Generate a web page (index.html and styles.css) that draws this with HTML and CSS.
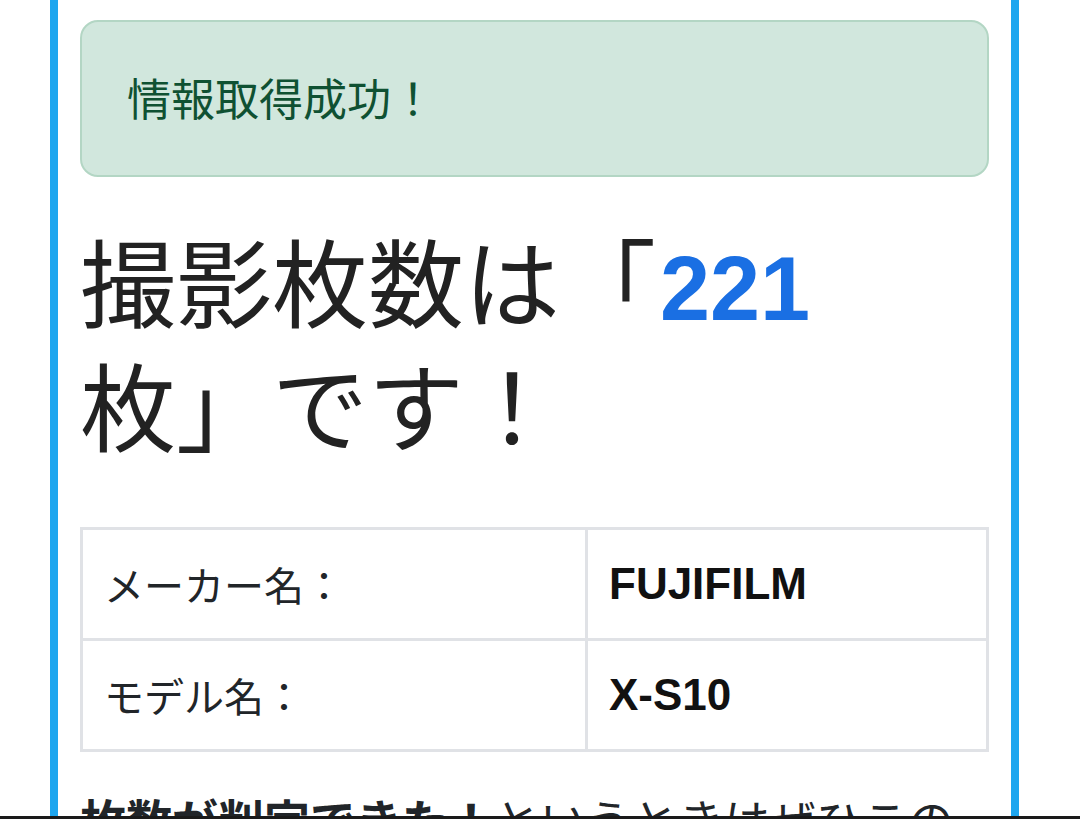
FILE: index.html
```html
<!DOCTYPE html>
<html lang="ja">
<head>
<meta charset="utf-8">
<title>撮影枚数</title>
<link rel="stylesheet" href="styles.css">
</head>
<body>
<main class="frame">
  <div class="alert">情報取得成功！</div>
  <h1 class="count">撮影枚数は「<span class="num">221</span>枚」です！</h1>
  <table class="info">
    <tr>
      <td class="label">メーカー名：</td>
      <td class="value">FUJIFILM</td>
    </tr>
    <tr>
      <td class="label">モデル名：</td>
      <td class="value">X-S10</td>
    </tr>
  </table>
  <p class="note"><strong>枚数が判定できた！</strong>というときはぜひこの</p>
</main>
<div class="bottom-bar"></div>
</body>
</html>
```
FILE: styles.css
```css
html, body {
  margin: 0;
  padding: 0;
  background: #ffffff;
  height: 819px;
  overflow: hidden;
}
body {
  font-family: "Liberation Sans", "Noto Sans CJK JP", sans-serif;
  color: #212529;
}
.frame {
  box-sizing: border-box;
  margin-left: 50px;
  width: 969px;
  min-height: 819px;
  border-left: 8px solid #1ea6ef;
  border-right: 8px solid #1ea6ef;
  padding: 20px 22px 0 22px;
}
.alert {
  box-sizing: border-box;
  height: 157px;
  background: #d1e7dd;
  border: 2px solid #b3d6c4;
  border-radius: 18px;
  color: #0f5132;
  font-size: 44px;
  line-height: 61px;
  padding: 48px 45px 44px 45px;
  margin-bottom: 49px;
}
.count {
  margin: 0 0 56px 0;
  font-size: 96px;
  font-weight: 400;
  line-height: 121px;
  color: #222222;
  text-spacing-trim: space-all;
}
.num {
  color: #1a6fe3;
  font-weight: 700;
  font-size: 90px;
  margin-left: 4px;
}
.info {
  width: 909px;
  border-collapse: collapse;
  margin-bottom: 36px;
}
.info td {
  border: 3px solid #e0e2e6;
  height: 108px;
  padding: 0 21px;
  font-size: 40px;
  vertical-align: middle;
}
.info td.label {
  width: 460px;
  color: #212529;
}
.info td.value {
  font-weight: 700;
  font-size: 44px;
  color: #111111;
}
.note {
  margin: 0;
  font-size: 46px;
  line-height: 68px;
  color: #212529;
}
.note strong {
  font-weight: 700;
}
.bottom-bar {
  position: fixed;
  left: 0;
  right: 0;
  bottom: 0;
  height: 3px;
  background: #1a1a1a;
}
```
